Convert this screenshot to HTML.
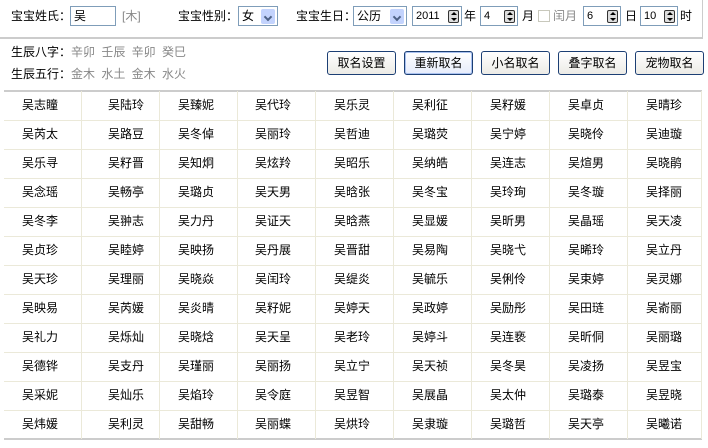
<!DOCTYPE html>
<html><head><meta charset="utf-8"><style>
*{margin:0;padding:0;box-sizing:border-box}
body{width:708px;height:448px;background:#fff;font:12px "Liberation Sans","Noto Sans CJK SC",sans-serif;color:#000;position:relative;overflow:hidden}
.a{position:absolute;white-space:nowrap;line-height:14px}
.g{color:#888}
.inp{position:absolute;border:1px solid #7f9db9;background:#fff;height:20px;padding:2px 3px;line-height:14px}
.spin{position:absolute;right:2px;top:3px;width:11px;height:13px;border:1px solid #333;border-radius:2px;background:#ddd}
.spin:before{content:"";position:absolute;left:2px;top:1px;border-left:3px solid transparent;border-right:3px solid transparent;border-bottom:3px solid #000}
.spin:after{content:"";position:absolute;left:2px;bottom:1px;border-left:3px solid transparent;border-right:3px solid transparent;border-top:3px solid #000}
.dd{position:absolute;right:2px;top:2px;width:14px;height:15px;background:#c3d3fd;border-radius:2px}
.dd:after{content:"";position:absolute;left:4px;top:5px;width:4px;height:4px;border-right:2px solid #4d6185;border-bottom:2px solid #4d6185;transform:rotate(45deg)}
.btn{position:absolute;top:51px;height:24px;width:69px;border:1px solid #1c3f74;border-radius:3px;background:linear-gradient(#fff,#ecebe6);text-align:center;line-height:22px;font-size:12px}
.grid{position:absolute;left:4px;top:90px;width:698px;height:350px;border-top:2px solid #ccc;border-bottom:2px solid #ccc}
.vl{position:absolute;top:91px;height:348px;width:1px;background:#ebe9d9}
.hl{position:absolute;left:4px;width:698px;height:1px;background:#ebe9d9}
</style></head><body>
<div style="position:absolute;left:0;top:37px;width:703px;height:2px;background:#ccc"></div>
<div style="position:absolute;left:702px;top:0;width:1px;height:38px;background:#ccc"></div>
<div class="a" style="left:11px;top:9px">宝宝姓氏：</div>
<div class="inp" style="left:70px;top:6px;width:46px">吴</div>
<div class="a g" style="left:122px;top:9px">[木]</div>
<div class="a" style="left:178px;top:9px">宝宝性别：</div>
<div class="inp" style="left:238px;top:6px;width:40px">女<div class="dd"></div></div>
<div class="a" style="left:296px;top:9px">宝宝生日：</div>
<div class="inp" style="left:353px;top:6px;width:54px">公历<div class="dd"></div></div>
<div class="inp" style="left:412px;top:6px;width:50px;font-size:11px">2011<div class="spin"></div></div>
<div class="a" style="left:464px;top:9px">年</div>
<div class="inp" style="left:480px;top:6px;width:38px;font-size:11px">4<div class="spin"></div></div>
<div class="a" style="left:522px;top:9px">月</div>
<div style="position:absolute;left:538px;top:10px;width:12px;height:12px;border:1px solid #c8c8bc"></div>
<div class="a g" style="left:553px;top:9px">闰月</div>
<div class="inp" style="left:583px;top:6px;width:38px;font-size:11px">6<div class="spin"></div></div>
<div class="a" style="left:625px;top:9px">日</div>
<div class="inp" style="left:640px;top:6px;width:38px;font-size:11px">10<div class="spin"></div></div>
<div class="a" style="left:680px;top:9px">时</div>
<div class="a" style="left:11px;top:45px">生辰八字：<span class="g" style="word-spacing:3px">辛卯 壬辰 辛卯 癸巳</span></div>
<div class="a" style="left:11px;top:67px">生辰五行：<span class="g" style="word-spacing:3px">金木 水土 金木 水火</span></div>
<div class="btn" style="left:327px">取名设置</div>
<div class="btn" style="left:404px;background:linear-gradient(#fff,#e6ecfb);box-shadow:inset 0 0 0 1px #a9c1f0">重新取名</div>
<div class="btn" style="left:481px">小名取名</div>
<div class="btn" style="left:558px">叠字取名</div>
<div class="btn" style="left:635px">宠物取名</div>
<div class="grid"></div>
<div id="lines"></div>
<div id="names"></div>
<script>
var L='';for(var i=1;i<=8;i++)L+='<div class="vl" style="left:'+(4+78*i-1)+'px"></div>';
L+='<div class="vl" style="left:701px"></div>';
for(var r=1;r<12;r++)L+='<div class="hl" style="top:'+(91+29*r)+'px"></div>';
document.getElementById('lines').innerHTML=L;
var d=[["吴志瞳","吴陆玲","吴臻妮","吴代玲","吴乐灵","吴利征","吴籽媛","吴卓贞","吴晴珍"],
["吴芮太","吴路豆","吴冬倬","吴丽玲","吴哲迪","吴璐荧","吴宁婷","吴晓伶","吴迪璇"],
["吴乐寻","吴籽晋","吴知炯","吴炫羚","吴昭乐","吴纳皓","吴连志","吴煊男","吴晓鹃"],
["吴念瑶","吴畅亭","吴璐贞","吴天男","吴晗张","吴冬宝","吴玲珣","吴冬璇","吴择丽"],
["吴冬李","吴翀志","吴力丹","吴证天","吴晗燕","吴显媛","吴昕男","吴晶瑶","吴天凌"],
["吴贞珍","吴睦婷","吴映扬","吴丹展","吴晋甜","吴易陶","吴晓弋","吴晞玲","吴立丹"],
["吴天珍","吴理丽","吴晓焱","吴闰玲","吴缇炎","吴毓乐","吴俐伶","吴束婷","吴灵娜"],
["吴映易","吴芮媛","吴炎晴","吴籽妮","吴婷天","吴政婷","吴励彤","吴田琏","吴嵛丽"],
["吴礼力","吴烁灿","吴晓焓","吴天呈","吴老玲","吴婷斗","吴连亵","吴昕侗","吴丽璐"],
["吴德铧","吴支丹","吴瑾丽","吴丽扬","吴立宁","吴天祯","吴冬昊","吴凌扬","吴昱宝"],
["吴采妮","吴灿乐","吴焰玲","吴令庭","吴昱智","吴展晶","吴太仲","吴璐泰","吴昱晓"],
["吴炜媛","吴利灵","吴甜畅","吴丽蝶","吴烘玲","吴隶璇","吴璐哲","吴天亭","吴曦诺"]];
var xs=[22,108,178,255,334,412,490,568,646],N='';
for(var r=0;r<12;r++)for(var c=0;c<9;c++)N+='<div class="a" style="left:'+xs[c]+'px;top:'+(98+29*r)+'px">'+d[r][c]+'</div>';
document.getElementById('names').innerHTML=N;
</script>
</body></html>
